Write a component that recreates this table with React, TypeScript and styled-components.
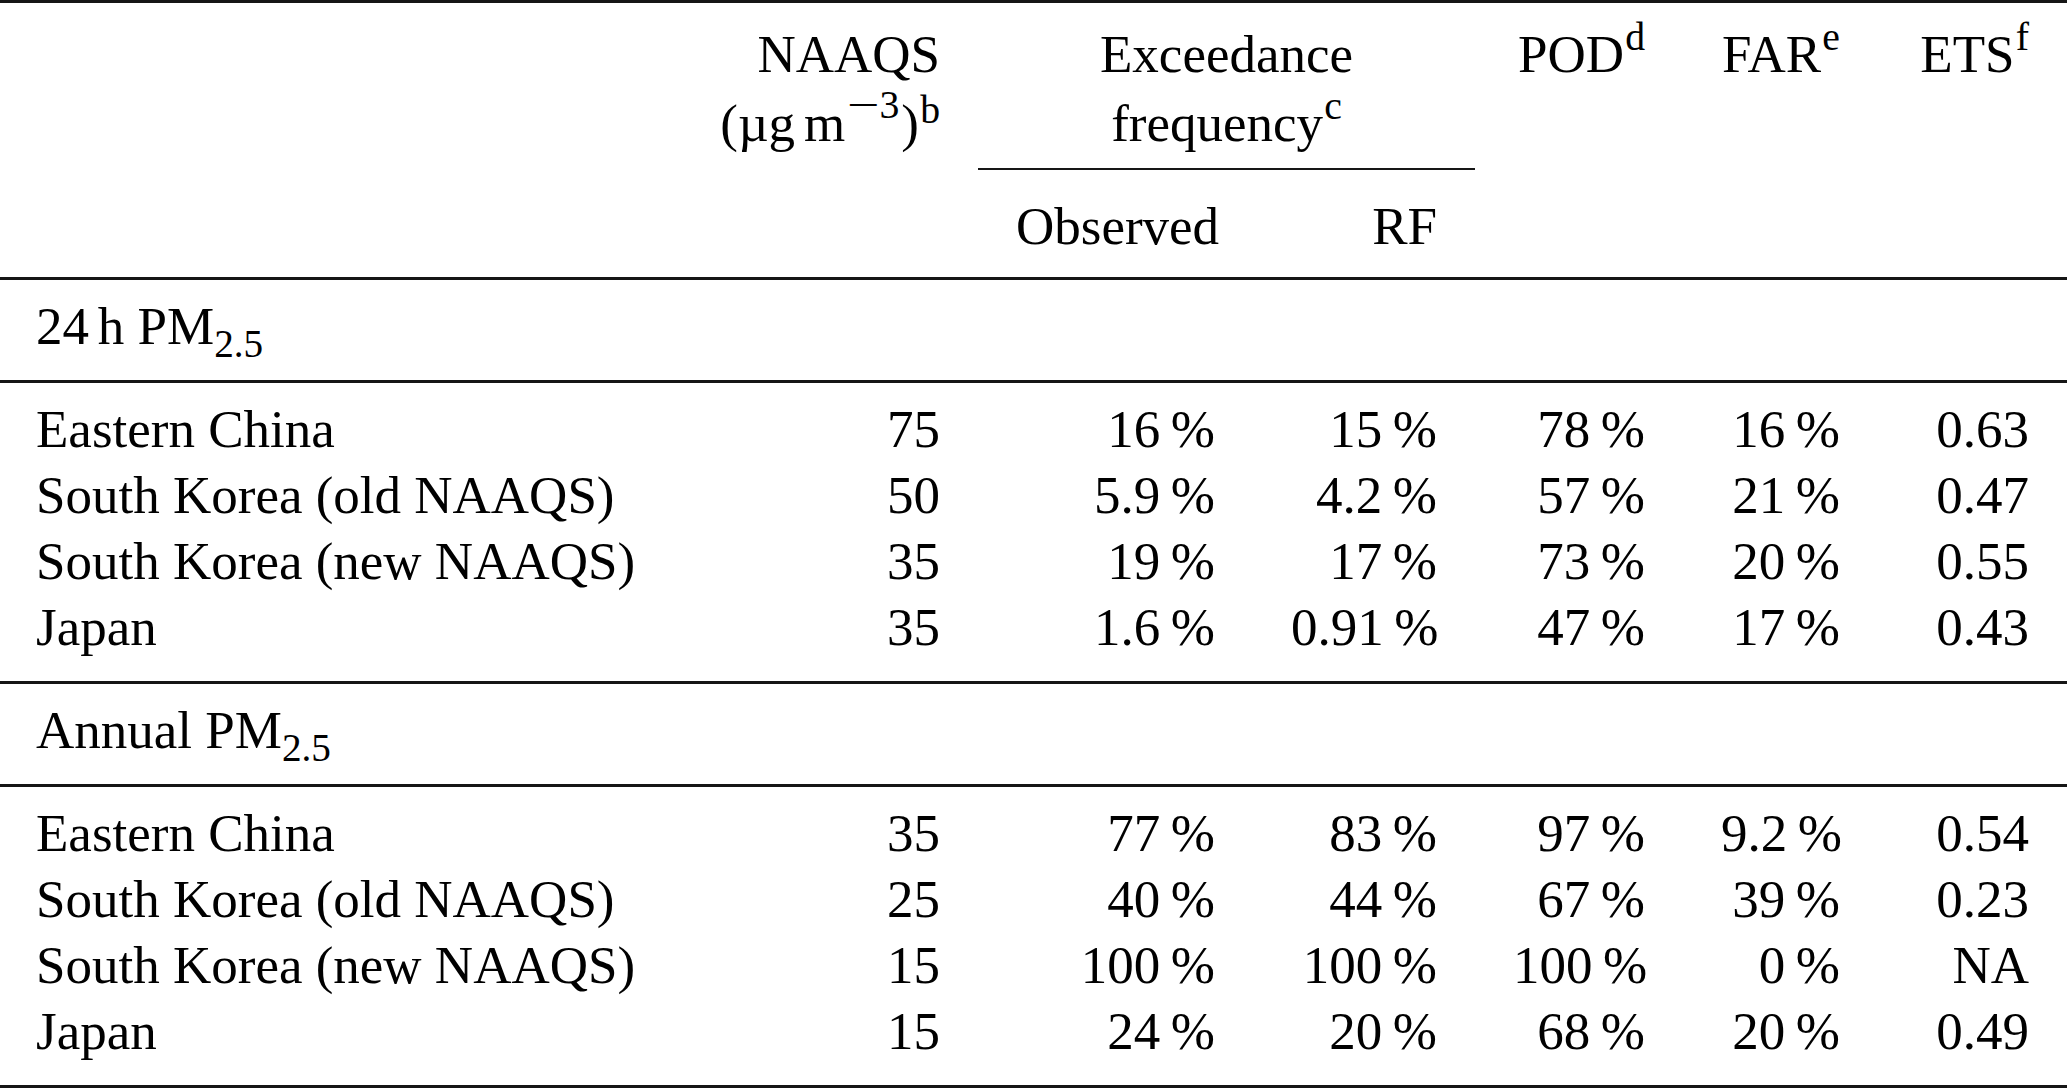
import React from "react";
import styled, { createGlobalStyle, css } from "styled-components";

const GlobalStyle = createGlobalStyle`
  html, body { margin: 0; padding: 0; background: #ffffff; }
  body { font-family: "Liberation Serif", "Times New Roman", serif; color: #000; }
`;

const COLS = "600px 378px 275px 222px 208px 195px 1fr";
const RULE = "#161616";

const Table = styled.div`
  width: 2067px;
  font-family: "Liberation Serif", "Times New Roman", serif;
  font-size: 53px;
  color: #000;
  border-top: 3px solid ${RULE};
`;

const Head = styled.div`
  display: grid;
  grid-template-columns: ${COLS};
  grid-template-rows: auto auto;
  border-bottom: 3px solid ${RULE};
`;

const HeadCell = styled.div<{ $col: number; $span?: number; $row?: number; $group?: boolean }>`
  grid-column: ${(p) => p.$col} / span ${(p) => p.$span ?? 1};
  grid-row: ${(p) => p.$row ?? 1};
  padding: ${(p) => (p.$row === 2 ? "23px 38px 18px" : "17px 38px 0")};
  line-height: ${(p) => (p.$row === 2 ? "66px" : "69px")};
  text-align: right;
  white-space: nowrap;
  ${(p) =>
    p.$group &&
    css`
      text-align: center;
      padding-bottom: 10px;
      border-bottom: 2px solid ${RULE};
      align-self: start;
    `}
`;

const Line = styled.div``;

const GroupTitle = styled.div`
  padding: 13px 36px 21px;
  line-height: 66px;
  white-space: nowrap;
  border-bottom: 3px solid ${RULE};
`;

const GroupBody = styled.div`
  display: grid;
  grid-template-columns: ${COLS};
  padding: 13px 0 21px;
  border-bottom: 3px solid ${RULE};
`;

const Cell = styled.div<{ $label?: boolean }>`
  line-height: 66px;
  padding: 0 38px;
  text-align: right;
  white-space: nowrap;
  ${(p) =>
    p.$label &&
    css`
      text-align: left;
      padding-left: 36px;
    `}
`;

const Sup = styled.span<{ $low?: boolean }>`
  font-size: 0.75em;
  line-height: 0;
  margin-left: 0.03em;
  vertical-align: ${(p) => (p.$low ? "0.45em" : "0.55em")};
`;

const MathSup = styled.span`
  font-size: 0.75em;
  line-height: 0;
  vertical-align: 0.58em;
  margin-left: 0.04em;
  margin-right: 0.05em;
`;

const Minus = styled.span`
  display: inline-block;
  transform: scaleX(1.45);
  margin: 0 0.13em;
`;

const Sub = styled.span`
  font-size: 0.74em;
  line-height: 0;
  vertical-align: -0.33em;
`;

const Thin = styled.span`
  display: inline-block;
  width: 0.1667em;
`;

const Pct = styled.span`
  margin-left: 0.2em;
`;

type Row = [string, string, string, string, string, string, string];

const groups: { title: React.ReactNode; rows: Row[] }[] = [
  {
    title: (
      <>
        24<Thin />h PM<Sub>2.5</Sub>
      </>
    ),
    rows: [
      ["Eastern China", "75", "16", "15", "78", "16", "0.63"],
      ["South Korea (old NAAQS)", "50", "5.9", "4.2", "57", "21", "0.47"],
      ["South Korea (new NAAQS)", "35", "19", "17", "73", "20", "0.55"],
      ["Japan", "35", "1.6", "0.91", "47", "17", "0.43"],
    ],
  },
  {
    title: (
      <>
        Annual PM<Sub>2.5</Sub>
      </>
    ),
    rows: [
      ["Eastern China", "35", "77", "83", "97", "9.2", "0.54"],
      ["South Korea (old NAAQS)", "25", "40", "44", "67", "39", "0.23"],
      ["South Korea (new NAAQS)", "15", "100", "100", "100", "0", "NA"],
      ["Japan", "15", "24", "20", "68", "20", "0.49"],
    ],
  },
];

const Percent: React.FC<{ v: string }> = ({ v }) => (
  <>
    {v}
    <Pct>%</Pct>
  </>
);

export default function App() {
  return (
    <>
      <GlobalStyle />
      <Table>
        <Head>
          <HeadCell $col={1} />
          <HeadCell $col={2}>
            <Line>NAAQS</Line>
            <Line>
              (µg<Thin />m
              <MathSup>
                <Minus>−</Minus>3
              </MathSup>
              )<Sup $low>b</Sup>
            </Line>
          </HeadCell>
          <HeadCell $col={3} $span={2} $group>
            <Line>Exceedance</Line>
            <Line>
              frequency<Sup>c</Sup>
            </Line>
          </HeadCell>
          <HeadCell $col={5}>
            POD<Sup>d</Sup>
          </HeadCell>
          <HeadCell $col={6}>
            FAR<Sup>e</Sup>
          </HeadCell>
          <HeadCell $col={7}>
            ETS<Sup>f</Sup>
          </HeadCell>
          <HeadCell $col={3} $row={2}>
            Observed
          </HeadCell>
          <HeadCell $col={4} $row={2}>
            RF
          </HeadCell>
        </Head>
        {groups.map((g, gi) => (
          <React.Fragment key={gi}>
            <GroupTitle>{g.title}</GroupTitle>
            <GroupBody>
              {g.rows.map((r, ri) => (
                <React.Fragment key={ri}>
                  <Cell $label>{r[0]}</Cell>
                  <Cell>{r[1]}</Cell>
                  <Cell>
                    <Percent v={r[2]} />
                  </Cell>
                  <Cell>
                    <Percent v={r[3]} />
                  </Cell>
                  <Cell>
                    <Percent v={r[4]} />
                  </Cell>
                  <Cell>
                    <Percent v={r[5]} />
                  </Cell>
                  <Cell>{r[6]}</Cell>
                </React.Fragment>
              ))}
            </GroupBody>
          </React.Fragment>
        ))}
      </Table>
    </>
  );
}
